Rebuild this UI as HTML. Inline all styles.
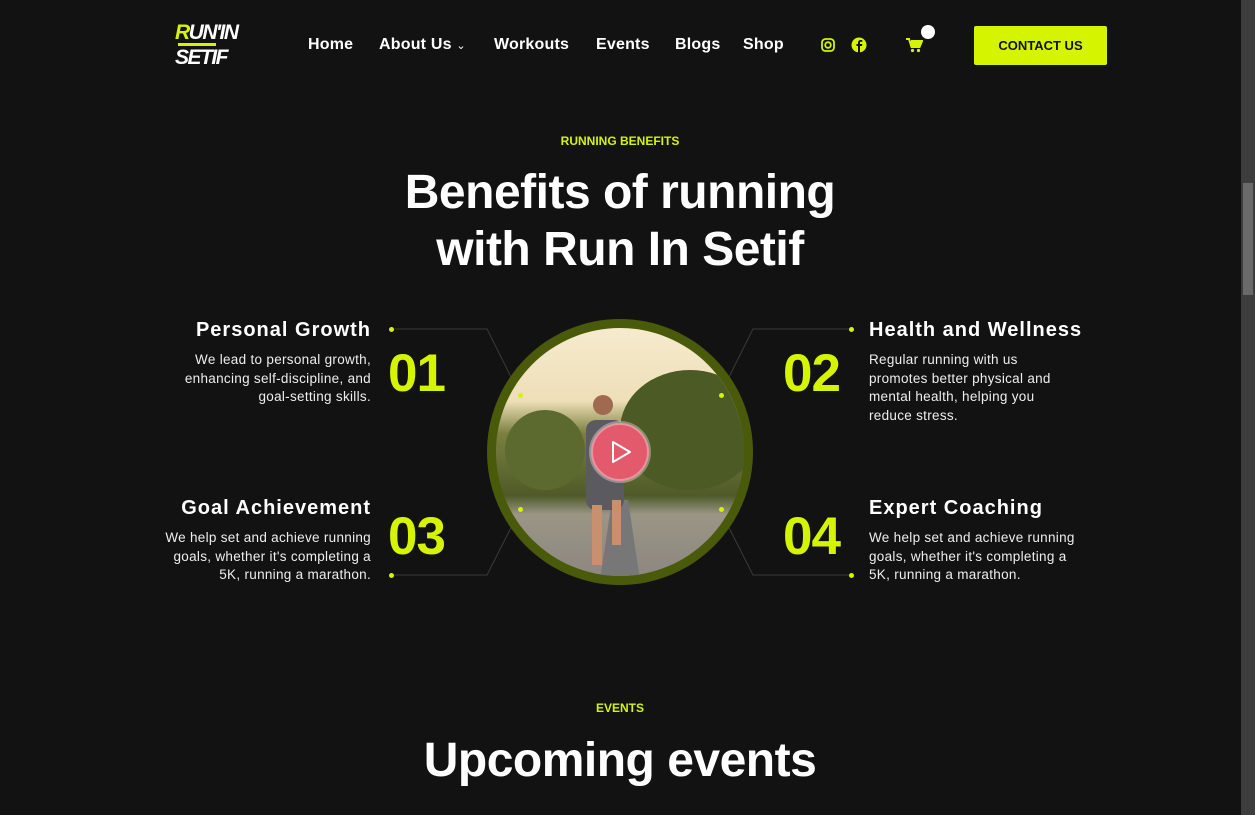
<!DOCTYPE html>
<html><head><meta charset="utf-8"><style>
*{margin:0;padding:0;box-sizing:border-box}
body{width:1255px;height:815px;background:#121212;overflow:hidden;position:relative;font-family:"Liberation Sans",Arial,sans-serif;color:#fff}
.abs{position:absolute}
.nav a{position:absolute;top:36px;font-weight:700;font-size:16px;color:#fff;letter-spacing:0.2px}
.h3{font-weight:900;font-size:20px;letter-spacing:1px;white-space:nowrap}
.p{font-size:13.5px;line-height:18.5px;color:#eee;letter-spacing:0.3px;white-space:nowrap}
.num{font-weight:900;font-size:53px;color:#d4f400;letter-spacing:-1px;line-height:1}
.dot{position:absolute;width:5px;height:5px;border-radius:50%;background:#d4f400}
.big{font-weight:900;font-size:48px;line-height:57px;letter-spacing:-0.5px}
</style></head><body>
<!-- logo -->
<div class="abs" style="left:175px;top:20px;width:60px;height:55px;font-weight:900;font-style:italic;font-size:21px;line-height:25px;letter-spacing:-1.5px">
<span style="color:#d4f400">R</span>UN'IN<br>SETIF</div>
<div class="abs" style="left:178px;top:43px;width:38px;height:3px;background:#d4f400"></div>
<div class="nav">
<a style="left:308px">Home</a>
<a style="left:379px">About Us <span style="font-weight:400;font-size:11px">&#8964;</span></a>
<a style="left:494px">Workouts</a>
<a style="left:596px">Events</a>
<a style="left:675px">Blogs</a>
<a style="left:743px">Shop</a>
</div>
<svg class="abs" style="left:821px;top:38px" width="14" height="14" viewBox="0 0 14 14"><rect x="1" y="1" width="12" height="12" rx="3.5" fill="none" stroke="#d4f400" stroke-width="1.8"/><circle cx="7" cy="7" r="2.8" fill="none" stroke="#d4f400" stroke-width="1.8"/></svg>
<svg class="abs" style="left:851px;top:37px" width="16" height="16" viewBox="0 0 16 16"><circle cx="8" cy="8" r="7.5" fill="#d4f400"/><path d="M9 16V9h2l.3-2H9V5.8c0-.6.2-1 1-1h1.3V3.1C11 3 10.4 3 9.8 3 8.3 3 7 3.9 7 5.6V7H5.5v2H7v7z" fill="#121212"/></svg>
<svg class="abs" style="left:906px;top:38px" width="17" height="15" viewBox="0 0 17 15"><path d="M0 1h3l2.5 8h8L16 3H5" fill="none" stroke="#d4f400" stroke-width="2"/><rect x="4" y="3" width="11" height="5" fill="#d4f400"/><circle cx="6.5" cy="12.5" r="1.6" fill="#d4f400"/><circle cx="12.5" cy="12.5" r="1.6" fill="#d4f400"/></svg>
<div class="abs" style="left:921px;top:25px;width:14px;height:14px;border-radius:50%;background:#fff"></div>
<div class="abs" style="left:974px;top:26px;width:133px;height:39px;background:#d4f400;border-radius:2px;color:#111;font-weight:900;font-size:13px;text-align:center;line-height:39px">CONTACT US</div>
<!-- scrollbar -->
<div class="abs" style="left:1241px;top:0;width:14px;height:815px;background:#3d3d3d"></div>
<div class="abs" style="left:1243px;top:183px;width:10px;height:112px;background:#6a6a6a"></div>

<div class="abs" style="left:0;width:1240px;top:134px;text-align:center;color:#d4f400;font-weight:900;font-size:12px">RUNNING BENEFITS</div>
<div class="abs big" style="left:0;width:1240px;top:164px;text-align:center">Benefits of running<br>with Run In Setif</div>

<!-- lines -->
<svg class="abs" style="left:0;top:0" width="1240" height="815"><g stroke="#3a3a3a" stroke-width="1" fill="none">
<path d="M391 329H487L520 395"/><path d="M391 575H487L520 510"/>
<path d="M851 329H753L720 395"/><path d="M851 575H753L720 510"/></g>
<defs><clipPath id="c"><circle cx="620" cy="452" r="124"/></clipPath>
<linearGradient id="g" x1="0" y1="0" x2="0" y2="1"><stop offset="0" stop-color="#f7ecd0"/><stop offset=".3" stop-color="#eedfb8"/><stop offset=".42" stop-color="#7b8040"/><stop offset=".65" stop-color="#4e5a28"/><stop offset=".72" stop-color="#9a9585"/><stop offset="1" stop-color="#8a8480"/></linearGradient></defs>
<circle cx="620" cy="452" r="133" fill="#4a5a0b"/>
<g clip-path="url(#c)"><rect x="490" y="320" width="260" height="270" fill="url(#g)"/>
<ellipse cx="690" cy="430" rx="70" ry="60" fill="#4c5a26"/><ellipse cx="545" cy="450" rx="40" ry="40" fill="#5c6a30"/>
<path d="M600 580L612 500 L628 500 L640 580Z" fill="#777"/>
<rect x="586" y="420" width="38" height="90" rx="10" fill="#5a5a60"/><circle cx="603" cy="405" r="10" fill="#a06a50"/>
<rect x="592" y="505" width="10" height="60" fill="#c99070"/><rect x="612" y="500" width="9" height="45" fill="#c99070"/>
</g>
<circle cx="620" cy="452" r="29" fill="#e35a6c" stroke="rgba(255,255,255,.35)" stroke-width="4"/>
<path d="M613 442L630 452L613 462Z" fill="none" stroke="#fff" stroke-width="2" stroke-linejoin="round"/>
</svg>
<div class="dot" style="left:389px;top:327px"></div><div class="dot" style="left:389px;top:573px"></div>
<div class="dot" style="left:849px;top:327px"></div><div class="dot" style="left:849px;top:573px"></div>
<div class="dot" style="left:518px;top:393px"></div><div class="dot" style="left:518px;top:507px"></div>
<div class="dot" style="left:719px;top:393px"></div><div class="dot" style="left:719px;top:507px"></div>

<div class="abs h3" style="right:884px;top:319px">Personal Growth</div>
<div class="abs p" style="right:884px;top:351px;text-align:right">We lead to personal growth,<br>enhancing self-discipline, and<br>goal-setting skills.</div>
<div class="abs num" style="left:388px;top:347px">01</div>
<div class="abs h3" style="right:884px;top:497px">Goal Achievement</div>
<div class="abs p" style="right:884px;top:529px;text-align:right">We help set and achieve running<br>goals, whether it's completing a<br>5K, running a marathon.</div>
<div class="abs num" style="left:388px;top:510px">03</div>

<div class="abs h3" style="left:869px;top:319px">Health and Wellness</div>
<div class="abs p" style="left:869px;top:351px">Regular running with us<br>promotes better physical and<br>mental health, helping you<br>reduce stress.</div>
<div class="abs num" style="left:783px;top:347px">02</div>
<div class="abs h3" style="left:869px;top:497px">Expert Coaching</div>
<div class="abs p" style="left:869px;top:529px">We help set and achieve running<br>goals, whether it's completing a<br>5K, running a marathon.</div>
<div class="abs num" style="left:783px;top:510px">04</div>

<div class="abs" style="left:0;width:1240px;top:701px;text-align:center;color:#d4f400;font-weight:900;font-size:12px">EVENTS</div>
<div class="abs big" style="left:0;width:1240px;top:732px;text-align:center">Upcoming events</div>
</body></html>
